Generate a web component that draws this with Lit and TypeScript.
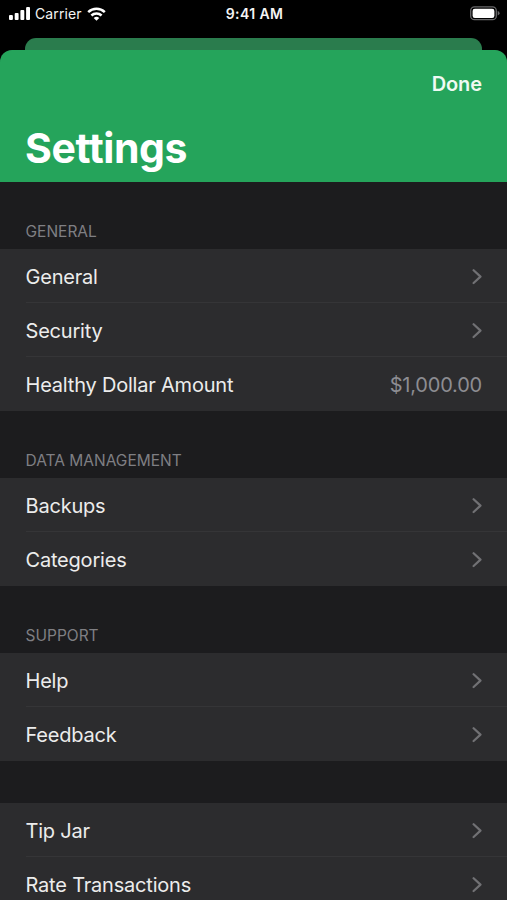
import { LitElement, html, css, svg, nothing } from "lit";
import { customElement, property } from "lit/decorators.js";

interface Item {
  label: string;
  value?: string;
}

interface Section {
  title?: string;
  items: Item[];
}

const SECTIONS: Section[] = [
  {
    title: "GENERAL",
    items: [
      { label: "General" },
      { label: "Security" },
      { label: "Healthy Dollar Amount", value: "$1,000.00" },
    ],
  },
  { title: "DATA MANAGEMENT", items: [{ label: "Backups" }, { label: "Categories" }] },
  { title: "SUPPORT", items: [{ label: "Help" }, { label: "Feedback" }] },
  { items: [{ label: "Tip Jar" }, { label: "Rate Transactions" }] },
];

@customElement("status-bar")
export class StatusBar extends LitElement {
  static styles = css`
    :host {
      display: grid;
      grid-template-columns: 1fr auto 1fr;
      align-items: center;
      height: 27px;
      padding: 0 7px 0 9px;
      box-sizing: border-box;
      color: #f4f4f4;
      font-size: 14px;
      line-height: 27px;
    }
    .left {
      display: flex;
      align-items: center;
    }
    .carrier {
      margin: 0 5px 0 5px;
      letter-spacing: 0.1px;
    }
    .time {
      padding-top: 1px;
      font-size: 14px;
      line-height: 26px;
      font-weight: 600;
      letter-spacing: 0.4px;
    }
    .battery {
      justify-self: end;
    }
    svg {
      display: block;
    }
  `;

  render() {
    const bars = [5, 7, 10, 13];
    return html`
      <div class="left">
        <svg width="21" height="13" viewBox="0 0 21 13" fill="#fff">
          ${bars.map(
            (h, i) => svg`<rect x=${i * 5.7} y=${13 - h} width="3.9" height=${h} rx="1"></rect>`
          )}
        </svg>
        <span class="carrier">Carrier</span>
        <svg width="19" height="14" viewBox="0 0 19 14" fill="none" stroke="#fff" stroke-width="2.5">
          <path d="M1.2 5.2A12 12 0 0 1 17.8 5.2"></path>
          <path d="M4.4 8.5A7.4 7.4 0 0 1 14.6 8.5"></path>
          <path d="M9.5 13.8L6.7 11Q9.5 8.7 12.3 11Z" fill="#fff" stroke="none"></path>
        </svg>
      </div>
      <span class="time">9:41 AM</span>
      <svg class="battery" width="30" height="15" viewBox="0 0 30 15">
        <rect x="0.7" y="0.9" width="25.6" height="12.8" rx="3.8" fill="none" stroke="#68686a" stroke-width="1.3"></rect>
        <rect x="2.6" y="2.7" width="21.8" height="9.2" rx="2.2" fill="#fff"></rect>
        <path d="M27.7 5.1Q29.6 5.7 29.6 7.3T27.7 9.5Z" fill="#68686a"></path>
      </svg>
    `;
  }
}

@customElement("settings-row")
export class SettingsRow extends LitElement {
  @property() label = "";
  @property() value?: string;

  static styles = css`
    :host {
      display: flex;
      align-items: center;
      justify-content: space-between;
      height: 54px;
      margin-left: 26px;
      padding: 3px 25px 0 0;
      box-sizing: border-box;
      border-bottom: 1px solid #353537;
      font-size: 20px;
      line-height: 26px;
      letter-spacing: -0.2px;
      color: #ececec;
    }
    :host(:last-child) {
      border-bottom-color: transparent;
    }
    .label {
      margin-left: -0.5px;
    }
    .value {
      color: #8d8d92;
    }
    .chevron {
      display: block;
    }
  `;

  render() {
    return html`
      <span class="label">${this.label}</span>
      ${this.value
        ? html`<span class="value">${this.value}</span>`
        : html`<svg class="chevron" width="10" height="16" viewBox="0 0 10 16" fill="none" stroke="#717174" stroke-width="2.2" stroke-linecap="round" stroke-linejoin="round">
            <path d="M1.6 1.2L8.5 7.6L1.6 14"></path>
          </svg>`}
    `;
  }
}

@customElement("app-root")
export class AppRoot extends LitElement {
  static styles = css`
    :host {
      display: flex;
      flex-direction: column;
      width: 507px;
      height: 900px;
      overflow: hidden;
      background: #000;
      font-family: Inter, "Liberation Sans", sans-serif;
    }
    .behind {
      flex: none;
      height: 12px;
      margin: 11px 25px 0;
      border-radius: 11px 11px 0 0;
      background: #2a7c4d;
    }
    .sheet {
      flex: 1;
      min-height: 0;
      overflow: hidden;
      border-radius: 12px 12px 0 0;
      background: #1c1c1e;
    }
    .header {
      display: flex;
      flex-direction: column;
      justify-content: space-between;
      height: 131.5px;
      padding: 20px 25px 8px;
      box-sizing: border-box;
      background: #25a45b;
      color: #fff;
    }
    .done {
      align-self: flex-end;
      font-size: 20px;
      line-height: 28px;
      font-weight: 600;
      letter-spacing: -0.1px;
      color: #effaf3;
    }
    .title {
      margin: 0;
      font-size: 41px;
      line-height: 52px;
      font-weight: 700;
      letter-spacing: -0.4px;
    }
    .caption {
      display: flex;
      align-items: flex-end;
      height: 67px;
      padding: 0 25.5px 6px;
      box-sizing: border-box;
      font-size: 15.5px;
      line-height: 22px;
      color: #7f7f83;
    }
    .caption.blank {
      height: 42px;
    }
    .group {
      background: #2c2c2e;
    }
  `;

  render() {
    return html`
      <status-bar></status-bar>
      <div class="behind"></div>
      <div class="sheet">
        <header class="header">
          <span class="done">Done</span>
          <h1 class="title">Settings</h1>
        </header>
        ${SECTIONS.map(
          (s) => html`
            <div class="caption ${s.title ? "" : "blank"}">${s.title ?? nothing}</div>
            <div class="group">
              ${s.items.map(
                (it) => html`<settings-row .label=${it.label} .value=${it.value}></settings-row>`
              )}
            </div>
          `
        )}
      </div>
    `;
  }
}
